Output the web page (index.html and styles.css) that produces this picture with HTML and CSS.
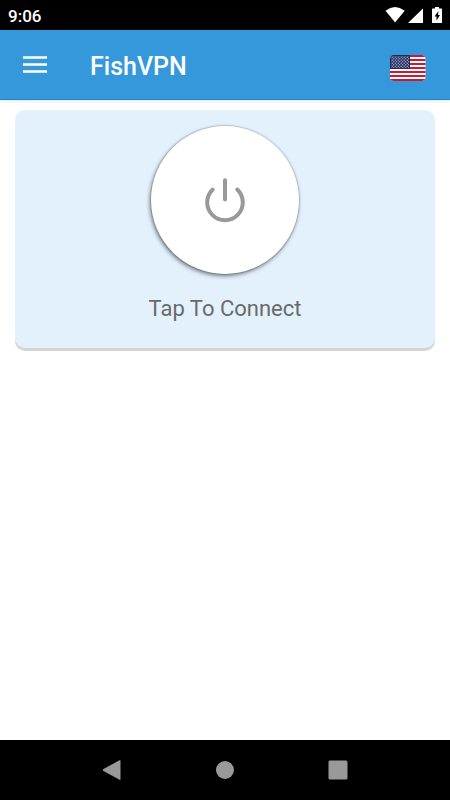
FILE: index.html
```html
<!DOCTYPE html>
<html lang="en">
<head>
<meta charset="utf-8">
<meta name="viewport" content="width=device-width, initial-scale=1">
<title>FishVPN</title>
<link rel="stylesheet" href="styles.css">
</head>
<body>
<div class="status-bar">
  <span class="clock">9:06</span>
  <svg class="status-icons" width="60" height="18" viewBox="0 0 60 18" fill="#fff" aria-hidden="true">
    <path d="M0.500 4.700Q10 -2.500 19.700 4.700L10.100 16.500Z"/>
    <path d="M38 2.500V17H23Z"/>
    <path d="M50 1h4v1.500h2.500q.5 0 .5.500V16.500q0 .5-.5.500h-9q-.5 0-.5-.5V3q0-.5.5-.5H50z"/>
    <path d="M53.500 5L49.500 10.500h2V14.500L55 9h-2z" fill="#000"/>
  </svg>
</div>
<header class="app-bar">
  <button class="icon-button" type="button" aria-label="Menu">
    <svg width="24" height="17" viewBox="0 0 24 17" fill="#fff" aria-hidden="true"><path d="M0 .2h24v2.600H0zM0 7.200h24v2.600H0zM0 14.200h24v2.600H0z"/></svg>
  </button>
  <h1 class="title">FishVPN</h1>
  <button class="icon-button flag-button" type="button" aria-label="Server location: United States">
    <svg width="36" height="26" viewBox="0 0 36 26" aria-hidden="true">
      <defs>
        <clipPath id="flag-shape"><rect width="35.500" height="26" rx="4"/></clipPath>
        <pattern id="stars" width="3" height="3" patternUnits="userSpaceOnUse">
          <circle cx=".75" cy=".75" r=".7" fill="#b4bbd4"/><circle cx="2.250" cy="2.250" r=".7" fill="#b4bbd4"/>
        </pattern>
      </defs>
      <g clip-path="url(#flag-shape)">
        <path fill="#fff" d="M0 0h36v26H0z"/>
        <path fill="#cc1830" d="M0 0h36v2H0zM0 4h36v2H0zM0 8h36v2H0zM0 12h36v2H0zM0 16h36v2H0zM0 20h36v2H0zM0 24h36v2H0z"/>
        <path fill="#202a5c" d="M0 0h20v14H0z"/>
        <path fill="url(#stars)" d="M1 1h18v12H1z"/>
      </g>
    </svg>
  </button>
</header>
<main class="content">
  <section class="card">
    <button class="power" id="connect" type="button" aria-labelledby="connect-label">
      <svg width="50" height="50" viewBox="0 0 50 50" fill="none" stroke="#999" stroke-width="4" stroke-linecap="round" aria-hidden="true">
        <path d="M25 5.300V24.500"/>
        <path d="M12.700 14.500A17.800 17.800 0 1 0 37.300 14.500"/>
      </svg>
    </button>
    <label class="state" id="connect-label" for="connect">Tap To Connect</label>
  </section>
</main>
<nav class="nav-bar" aria-label="System">
  <button class="nav-button" type="button" aria-label="Back"><svg width="20" height="20" viewBox="0 0 20 20" fill="#999" aria-hidden="true"><path d="M17.500 .8V19.200q0 1-1 .5L0 10.700q-1-.7 0-1.400L16.500 .300q1-.5 1 .5z"/></svg></button>
  <button class="nav-button" type="button" aria-label="Home"><svg width="20" height="20" viewBox="0 0 20 20" fill="#999" aria-hidden="true"><circle cx="10" cy="10" r="9"/></svg></button>
  <button class="nav-button" type="button" aria-label="Recent apps"><svg width="20" height="20" viewBox="0 0 20 20" fill="#999" aria-hidden="true"><rect x=".5" y=".5" width="19" height="19" rx="1.500"/></svg></button>
</nav>
</body>
</html>
```
FILE: styles.css
```css
* {
  box-sizing: border-box;
}

body {
  display: flex;
  flex-direction: column;
  min-height: 100vh;
  margin: 0;
  background: #fff;
  font-family: Roboto, "Liberation Sans", sans-serif;
}

button {
  padding: 0;
  border: 0;
  background: none;
  cursor: pointer;
}

svg {
  display: block;
}

.status-bar {
  display: flex;
  align-items: center;
  justify-content: space-between;
  height: 30px;
  padding: 0 5px 0 8px;
  background: #000;
  color: #fff;
}

.clock {
  padding-top: 2px;
  font-size: 17px;
  font-weight: 500;
  line-height: 20px;
}

.app-bar {
  display: flex;
  align-items: center;
  height: 70px;
  padding: 0 24px 0 23px;
  border-bottom: 1px solid #1c86cf;
  background: #3598db;
  box-shadow: 0 1px 3px rgba(0, 0, 0, 0.12);
  color: #fff;
}

.title {
  flex: 1;
  margin: 0;
  padding: 4px 0 0 43px;
  font-size: 25px;
  font-weight: 500;
  line-height: 30px;
}

.flag-button {
  padding-top: 6px;
}

.content {
  flex: 1;
  padding: 10px 15px;
}

.card {
  display: flex;
  flex-direction: column;
  align-items: center;
  gap: 18px;
  padding: 16px 15px 22px;
  border-radius: 10px;
  background: #e3f1fd;
  box-shadow: 0 3px 0 #d5d5d5;
}

.power {
  display: flex;
  align-items: center;
  justify-content: center;
  width: 148px;
  height: 148px;
  border-radius: 50%;
  background: #fff;
  box-shadow: 0 0 1px 1px rgba(0, 0, 0, 0.12), -1px 2px 4px rgba(0, 0, 0, 0.5);
}

.state {
  color: #6a6a6a;
  font-size: 22px;
  line-height: 34px;
}

.nav-bar {
  display: flex;
  justify-content: center;
  height: 60px;
  background: #000;
}

.nav-button {
  display: flex;
  align-items: center;
  justify-content: center;
  width: 25%;
}
```
